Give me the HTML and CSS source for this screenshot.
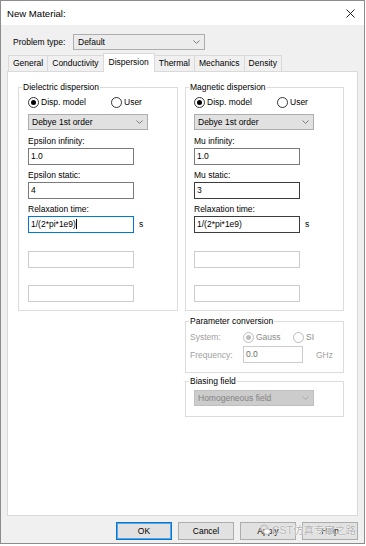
FILE: index.html
```html
<!DOCTYPE html>
<html lang="en">
<head>
  <meta charset="UTF-8">
  <title>New Material</title>
  <link rel="stylesheet" href="styles.css">
</head>
<body>
  <div class="window">
    <!-- Title bar -->
    <div class="titlebar">
      <span class="title">New Material:</span>
      <svg class="close" width="9" height="9" viewBox="0 0 9 9">
        <path d="M0.5 0.5 L8.5 8.5 M8.5 0.5 L0.5 8.5" stroke="#222" stroke-width="1" fill="none"/>
      </svg>
    </div>

    <!-- Problem type -->
    <div class="problem-row">
      <span class="problem-label">Problem type:</span>
      <div class="combo combo-problem">
        <span>Default</span>
        <svg class="chev" width="7" height="4" viewBox="0 0 7 4"><path d="M0.5 0.5 L3.5 3.5 L6.5 0.5" stroke="#7a7a7a" fill="none"/></svg>
      </div>
    </div>

    <!-- Tabs -->
    <div class="tabs">
      <div class="tab">General</div>
      <div class="tab">Conductivity</div>
      <div class="tab active">Dispersion</div>
      <div class="tab">Thermal</div>
      <div class="tab">Mechanics</div>
      <div class="tab">Density</div>
    </div>

    <div class="panel">
      <div class="columns">
        <!-- Dielectric -->
        <fieldset class="group">
          <legend>Dielectric dispersion</legend>
          <div class="group-body body-left">
            <div class="radio-row">
              <div class="radio radio-first"><span class="dot checked"></span>Disp. model</div>
              <div class="radio"><span class="dot"></span>User</div>
            </div>
            <div class="combo combo-model">
              <span>Debye 1st order</span>
              <svg class="chev" width="7" height="4" viewBox="0 0 7 4"><path d="M0.5 0.5 L3.5 3.5 L6.5 0.5" stroke="#7a7a7a" fill="none"/></svg>
            </div>
            <div class="field-label">Epsilon infinity:</div>
            <div class="edit">1.0</div>
            <div class="field-label">Epsilon static:</div>
            <div class="edit">4</div>
            <div class="field-label">Relaxation time:</div>
            <div class="unit-row">
              <div class="edit focused">1/(2*pi*1e9)<span class="caret"></span></div>
              <span class="unit">s</span>
            </div>
            <div class="edit disabled gap-first"></div>
            <div class="edit disabled gap-second"></div>
          </div>
        </fieldset>

        <div class="right-col">
          <!-- Magnetic -->
          <fieldset class="group">
            <legend>Magnetic dispersion</legend>
            <div class="group-body body-right">
              <div class="radio-row">
                <div class="radio radio-first"><span class="dot checked"></span>Disp. model</div>
                <div class="radio"><span class="dot"></span>User</div>
              </div>
              <div class="combo combo-model">
                <span>Debye 1st order</span>
                <svg class="chev" width="7" height="4" viewBox="0 0 7 4"><path d="M0.5 0.5 L3.5 3.5 L6.5 0.5" stroke="#7a7a7a" fill="none"/></svg>
              </div>
              <div class="field-label">Mu infinity:</div>
              <div class="edit">1.0</div>
              <div class="field-label">Mu static:</div>
              <div class="edit hover">3</div>
              <div class="field-label">Relaxation time:</div>
              <div class="unit-row">
                <div class="edit hover">1/(2*pi*1e9)</div>
                <span class="unit">s</span>
              </div>
              <div class="edit disabled gap-first"></div>
              <div class="edit disabled gap-second"></div>
            </div>
          </fieldset>

          <!-- Parameter conversion -->
          <fieldset class="group group-param">
            <legend>Parameter conversion</legend>
            <div class="group-body body-param">
              <div class="param-row">
                <span class="param-label">System:</span>
                <div class="radio radio-gauss off"><span class="dot checked"></span>Gauss</div>
                <div class="radio off"><span class="dot"></span>SI</div>
              </div>
              <div class="param-row freq-row">
                <span class="param-label">Frequency:</span>
                <div class="edit disabled freq">0.0</div>
                <span class="ghz">GHz</span>
              </div>
            </div>
          </fieldset>

          <!-- Biasing field -->
          <fieldset class="group group-bias">
            <legend>Biasing field</legend>
            <div class="group-body body-bias">
              <div class="combo combo-model combo-off">
                <span>Homogeneous field</span>
                <svg class="chev" width="7" height="4" viewBox="0 0 7 4"><path d="M0.5 0.5 L3.5 3.5 L6.5 0.5" stroke="#a8a8a8" fill="none"/></svg>
              </div>
            </div>
          </fieldset>
        </div>
      </div>
    </div>

    <!-- Dialog buttons -->
    <div class="buttons">
      <div class="btn btn-default">OK</div>
      <div class="btn">Cancel</div>
      <div class="btn">Apply</div>
      <div class="btn">Help</div>
    </div>

    <!-- watermark over the buttons -->
    <div class="watermark">
      <svg width="11" height="12" viewBox="0 0 11 12">
        <ellipse cx="4.2" cy="4.5" rx="3.8" ry="3.3" fill="none" stroke="#b8b8b8" stroke-width="1"/>
        <ellipse cx="7" cy="7.6" rx="3.3" ry="2.8" fill="#fff" stroke="#b8b8b8" stroke-width="1"/>
      </svg>
      <span>CST仿真专家之路</span>
    </div>
  </div>
</body>
</html>
```

FILE: styles.css
```css
body {
  margin: 0;
  background: #ffffff;
  font-family: "Liberation Sans", Arial, sans-serif;
  font-size: 8.5px;
  color: #000;
}
.window {
  position: relative;
  width: 365px;
  height: 544px;
  box-sizing: border-box;
  border: 1px solid #8c8c8c;
  background: #f0f0f0;
}
.titlebar {
  height: 24px;
  background: #fff;
  display: flex;
  align-items: center;
  justify-content: space-between;
  padding: 0 9px 0 6px;
}
.title {
  font-size: 9.6px;
}
.close {
  display: block;
}
.problem-row {
  display: flex;
  align-items: center;
  margin-top: 9px;
  padding-left: 12px;
}
.problem-label {
  width: 60px;
}
.combo {
  display: flex;
  align-items: center;
  justify-content: space-between;
  box-sizing: border-box;
  height: 16px;
  border: 1px solid #adadad;
  background: #e1e1e1;
  padding: 0 4px 0 3px;
}
.combo-problem {
  width: 132px;
  background: #ececec;
  padding-left: 4px;
}
.chev {
  display: block;
}
.tabs {
  display: flex;
  align-items: flex-end;
  height: 18px;
  margin-top: 3px;
  padding-left: 7px;
}
.tab {
  box-sizing: border-box;
  height: 16px;
  line-height: 15px;
  padding: 0 4px;
  border: 1px solid #d9d9d9;
  border-bottom: none;
  background: #f0f0f0;
  margin-right: -1px;
}
.tab.active {
  position: relative;
  z-index: 1;
  height: 19px;
  line-height: 17px;
  margin-bottom: -1px;
  background: #fff;
  padding: 0 5px;
}
.panel {
  margin: 0 6px;
  height: 445px;
  box-sizing: border-box;
  border: 1px solid #d9d9d9;
  background: #fff;
}
.columns {
  display: grid;
  grid-template-columns: 160px 159px;
  column-gap: 7px;
  align-items: start;
  padding: 10px 0 0 10px;
}
.group {
  margin: 0;
  padding: 0;
  border: 1px solid #dcdcdc;
  min-width: 0;
}
.group legend {
  margin-left: 3px;
  padding: 0 1px;
  line-height: 11px;
}
.body-left {
  padding: 0 0 8px 9px;
}
.body-right {
  padding: 0 0 8px 8px;
}
.radio-row {
  display: flex;
  align-items: center;
  height: 12px;
  margin-top: 3px;
}
.radio {
  display: flex;
  align-items: center;
  gap: 2px;
}
.radio-first {
  width: 83px;
}
.dot {
  box-sizing: border-box;
  width: 11px;
  height: 11px;
  border: 1px solid #333;
  border-radius: 50%;
  background: #fff;
  display: flex;
  align-items: center;
  justify-content: center;
}
.dot.checked::after {
  content: '';
  width: 5px;
  height: 5px;
  border-radius: 50%;
  background: #000;
}
.combo-model {
  width: 120px;
  margin-top: 6px;
}
.field-label {
  line-height: 11px;
  margin-top: 6px;
}
.edit + .field-label,
.unit-row + .field-label {
  margin-top: 5px;
}
.edit {
  box-sizing: border-box;
  width: 106px;
  height: 17px;
  line-height: 15px;
  border: 1px solid #7a7a7a;
  background: #fff;
  padding-left: 2px;
  margin-top: 1px;
}
.edit.hover {
  border-color: #3c3c3c;
}
.edit.focused {
  border-color: #0078d7;
}
.caret {
  display: inline-block;
  width: 1px;
  height: 10px;
  background: #000;
  vertical-align: -2px;
}
.edit.disabled {
  border-color: #cccccc;
}
.unit-row {
  display: flex;
  align-items: center;
}
.unit {
  margin-left: 5px;
}
.gap-first {
  margin-top: 18px;
}
.gap-second {
  margin-top: 17px;
}
.group-param {
  margin-top: 5px;
}
.body-param {
  padding: 0 0 9px 4px;
}
.param-row {
  display: flex;
  align-items: center;
  height: 12px;
  margin-top: 4px;
  color: #a0a0a0;
}
.param-label {
  width: 53px;
}
.radio-gauss {
  width: 50px;
}
.radio.off {
  color: #8a8a8a;
}
.radio.off .dot {
  border-color: #bcbcbc;
}
.radio.off .dot.checked::after {
  background: #bcbcbc;
}
.freq-row {
  height: 17px;
  margin-top: 3px;
}
.edit.freq {
  width: 60px;
  margin-top: 0;
  color: #6d6d6d;
}
.ghz {
  margin-left: 13px;
}
.group-bias {
  margin-top: 3px;
}
.body-bias {
  padding: 3px 0 10px 8px;
}
.body-bias .combo-model {
  margin-top: 0;
}
.combo-off {
  background: #cccccc;
  border-color: #bfbfbf;
  color: #838383;
}
.buttons {
  display: flex;
  justify-content: flex-end;
  gap: 6px;
  margin-top: 6px;
  padding-right: 6px;
}
.btn {
  box-sizing: border-box;
  width: 56px;
  height: 18px;
  line-height: 16px;
  text-align: center;
  border: 1px solid #adadad;
  background: #e1e1e1;
}
.btn-default {
  border-color: #0078d7;
  box-shadow: inset 0 0 0 1px #5ea3e0;
}
.watermark {
  position: absolute;
  right: 8px;
  bottom: 6px;
  display: flex;
  align-items: center;
  gap: 1px;
  font-family: "Liberation Sans", "Noto Sans CJK SC", sans-serif;
  font-size: 10.5px;
  color: #b4b4b4;
  text-shadow: 0 0 2px #fff, 0 0 1px #fff;
}
.watermark svg {
  display: block;
}
```
